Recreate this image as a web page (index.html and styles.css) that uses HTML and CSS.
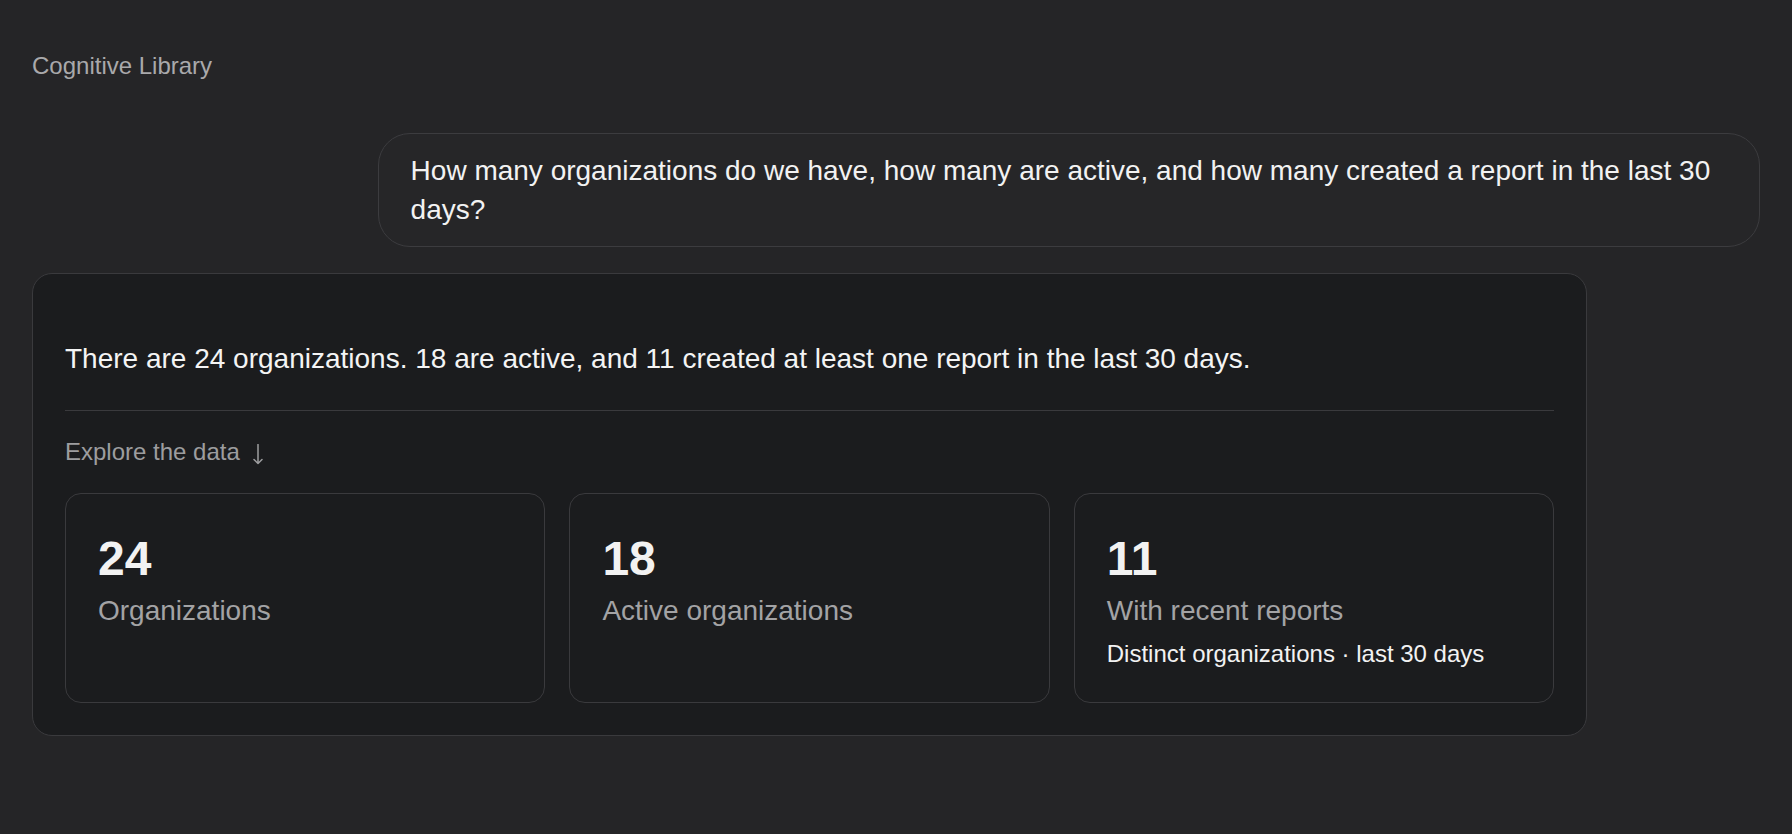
FILE: index.html
```html
<!DOCTYPE html>
<html lang="en">
<head>
  <meta charset="UTF-8" />
  <title>Cognitive Library</title>
  <meta name="viewport" content="width=device-width, initial-scale=1.0" />
  <link rel="stylesheet" href="styles.css">
</head>
<body>

<div class="page">
  <div class="brand">Cognitive Library</div>

  <div class="thread">
    <div class="msg-user">
      How many organizations do we have, how many are active, and how many created a report in the last 30 days?
    </div>

    <div class="answer">
      <p class="summary">There are 24 organizations. 18 are active, and 11 created at least one report in the last 30 days.</p>

      <div class="explore">
        <div class="explore-title">
          Explore the data
          <svg class="arrow" width="10" height="21" viewBox="0 0 10 21" aria-hidden="true">
            <path d="M5 0.5 V19.5 M1 15.5 L5 19.5 L9 15.5" fill="none" stroke="currentColor" stroke-width="1.5" stroke-linecap="round" stroke-linejoin="round"/>
          </svg>
        </div>

        <div class="stats">
          <div class="stat">
            <div class="stat-value">24</div>
            <div class="stat-label">Organizations</div>
          </div>
          <div class="stat">
            <div class="stat-value">18</div>
            <div class="stat-label">Active organizations</div>
          </div>
          <div class="stat">
            <div class="stat-value">11</div>
            <div class="stat-label">With recent reports</div>
            <div class="stat-note">Distinct organizations · last 30 days</div>
          </div>
        </div>
      </div>
    </div>
  </div>
</div>

</body>
</html>
```

FILE: styles.css
```css
body {
  margin: 0;
  font-family: "Liberation Sans", Arial, Helvetica, sans-serif;
  background-color: #252527;
  color: #f2f2f2;
}

.page {
  padding: 49px 32px;
}

.brand {
  font-size: 24px;
  line-height: 1.4;
  color: #a9a9ab;
}

.thread {
  display: flex;
  flex-direction: column;
  gap: 26px;
  margin-top: 50px;
}

.msg-user {
  align-self: flex-end;
  box-sizing: border-box;
  max-width: 80%;
  padding: 17px 32px;
  font-size: 28px;
  line-height: 1.4;
  color: #f2f2f2;
  background-color: #262628;
  border: 1px solid #3c3c3f;
  border-radius: 32px;
}

.answer {
  align-self: flex-start;
  width: 90%;
  box-sizing: border-box;
  padding: 32px;
  background-color: #1b1c1e;
  border: 1px solid #3a3a3d;
  border-radius: 20px;
}

.summary {
  margin: 33px 0 32px;
  font-size: 28px;
  line-height: 1.4;
  color: #f4f4f4;
}

.explore {
  border-top: 1px solid #3a3a3d;
  padding-top: 24px;
}

.explore-title {
  font-size: 24px;
  line-height: 1.4;
  color: #9d9d9f;
  margin-bottom: 24px;
}

.explore-title .arrow {
  margin-left: 7px;
  vertical-align: -5px;
}

.stats {
  display: grid;
  grid-template-columns: repeat(3, 1fr);
  gap: 24px;
}

.stat {
  padding: 36px 32px 32px;
  border: 1px solid #3a3a3d;
  border-radius: 16px;
  background-color: #1b1c1e;
}

.stat-value {
  font-size: 48px;
  line-height: 1.2;
  font-weight: bold;
  color: #f2f2f2;
}

.stat-label {
  margin-top: 4px;
  font-size: 28px;
  line-height: 1.4;
  color: #a3a3a5;
}

.stat-note {
  margin-top: 6px;
  font-size: 24px;
  line-height: 1.4;
  color: #f2f2f2;
}
```
